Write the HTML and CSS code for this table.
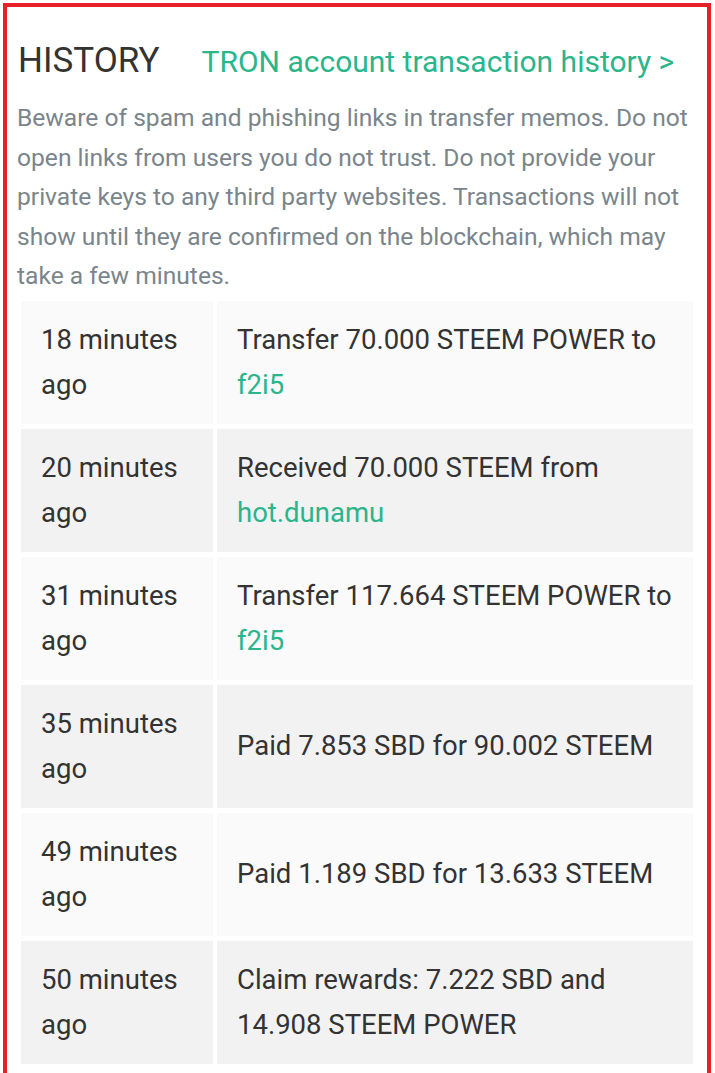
FILE: index.html
```html
<!DOCTYPE html>
<html>
<head>
<meta charset="utf-8">
<link rel="stylesheet" href="styles.css">
</head>
<body>
<div class="frame">
  <div class="head">
    <h2 class="title">HISTORY</h2>
    <a class="tron" href="#">TRON account transaction history &gt;</a>
  </div>
  <p class="warn">Beware of spam and phishing links in transfer memos. Do not open links from users you do not trust. Do not provide your private keys to any third party websites. Transactions will not show until they are confirmed on the blockchain, which may take a few minutes.</p>
  <table class="hist">
    <tbody>
      <tr><td class="when">18 minutes ago</td><td>Transfer 70.000 STEEM POWER to <a href="#">f2i5</a></td></tr>
      <tr><td class="when">20 minutes ago</td><td>Received 70.000 STEEM from <a href="#">hot.dunamu</a></td></tr>
      <tr><td class="when">31 minutes ago</td><td>Transfer 117.664 STEEM POWER to <a href="#">f2i5</a></td></tr>
      <tr><td class="when">35 minutes ago</td><td>Paid 7.853 SBD for 90.002 STEEM</td></tr>
      <tr><td class="when">49 minutes ago</td><td>Paid 1.189 SBD for 13.633 STEEM</td></tr>
      <tr><td class="when">50 minutes ago</td><td>Claim rewards: 7.222 SBD and 14.908 STEEM POWER</td></tr>
    </tbody>
  </table>
</div>
</body>
</html>
```
FILE: styles.css
```css
html, body {
  margin: 0;
  padding: 0;
  background: #fff;
}
body {
  font-family: Roboto, "Liberation Sans", sans-serif;
  color: #333;
  overflow: hidden;
  height: 1073px;
}
.frame {
  margin: 3px 0 0 3px;
  border: 4px solid #e8202a;
  border-bottom: none;
  padding: 24px 10px 0 10px;
  box-sizing: border-box;
  width: 708px;
  height: 1070px;
}
.head {
  display: flex;
  align-items: baseline;
  gap: 42px;
  padding-left: 1px;
}
.title {
  margin: 0;
  font-weight: 400;
  font-size: 35px;
  line-height: 60px;
  color: #333;
}
.tron {
  font-size: 30px;
  color: #2bb58b;
  text-decoration: none;
}
.warn {
  margin: 7px 0 0 0;
  font-size: 24.6px;
  line-height: 39.5px;
  color: #7a858b;
}
.hist {
  border-collapse: separate;
  border-spacing: 4px 5px;
  width: 100%;
  margin: 0;
  font-size: 27.5px;
  line-height: 45px;
}
.hist td {
  padding: 16px 20px 17px 20px;
  vertical-align: middle;
  color: #333;
}
.hist td.when {
  width: 152px;
}
.hist tr:nth-child(odd) td { background: #fafafa; }
.hist tr:nth-child(even) td { background: #f2f2f2; }
.hist a {
  color: #2bb58b;
  text-decoration: none;
}
```
